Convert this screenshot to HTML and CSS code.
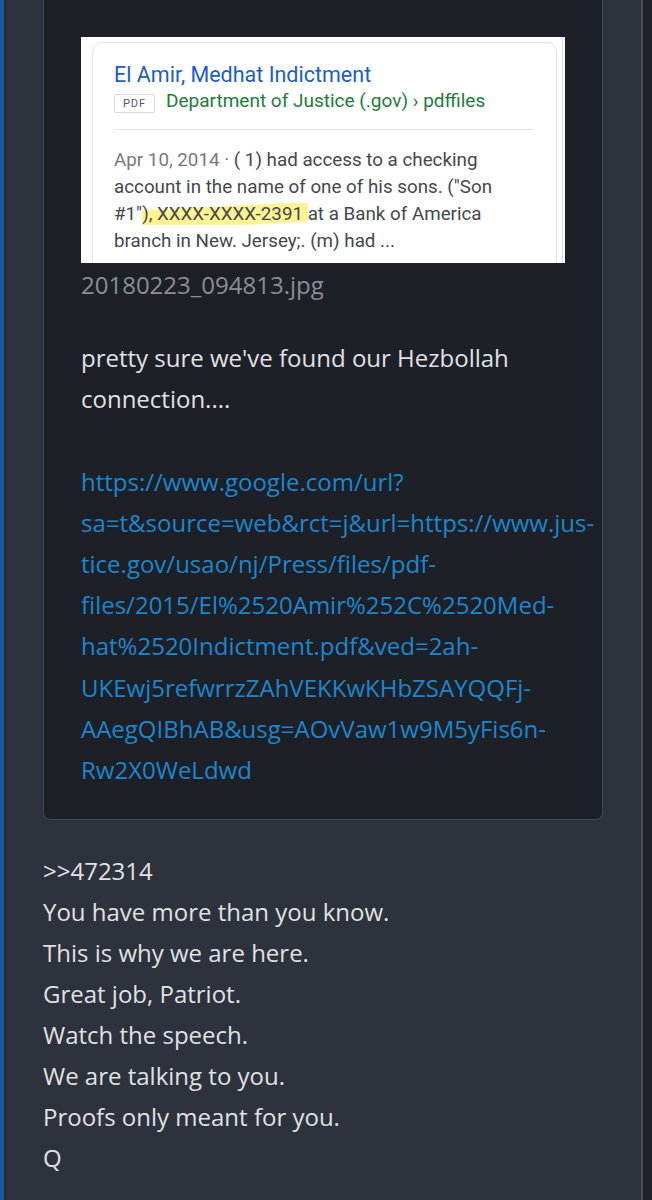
FILE: index.html
```html
<!DOCTYPE html>
<html>
<head>
<meta charset="utf-8">
<link rel="stylesheet" href="styles.css">
</head>
<body>
<div class="page">
  <div class="stripe"></div>
  <div class="post">
    <div class="quote">
      <div class="shot">
        <div class="gcard">
          <div class="gtitle">El Amir, Medhat Indictment</div>
          <div class="gsrc"><span class="pdf">PDF</span><span class="gsite">Department of Justice (.gov) › pdffiles</span></div>
          <div class="gdiv"></div>
          <div class="gsnip"><span class="gdate">Apr 10, 2014 · </span>( 1) had access to a checking<br>account in the name of one of his sons. ("Son<br>#1"<span class="hl">), XXXX-XXXX-2391 </span>at a Bank of America<br>branch in New. Jersey;. (m) had ...</div>
        </div>
        <div class="gedge"></div>
      </div>
      <div class="caption">20180223_094813.jpg</div>
      <p class="qtext">pretty sure we've found our Hezbollah<br>connection....<br><br><a class="link">https://www.google.com/url?<br>sa=t&amp;source=web&amp;rct=j&amp;url=https://www.jus-<br>tice.gov/usao/nj/Press/files/pdf-<br>files/2015/El%2520Amir%252C%2520Med-<br>hat%2520Indictment.pdf&amp;ved=2ah-<br>UKEwj5refwrrzZAhVEKKwKHbZSAYQQFj-<br>AAegQIBhAB&amp;usg=AOvVaw1w9M5yFis6n-<br>Rw2X0WeLdwd</a></p>
    </div>
    <div class="msg">
      <div>&gt;&gt;472314</div>
      <div>You have more than you know.</div>
      <div>This is why we are here.</div>
      <div>Great job, Patriot.</div>
      <div>Watch the speech.</div>
      <div>We are talking to you.</div>
      <div>Proofs only meant for you.</div>
      <div>Q</div>
    </div>
  </div>
  <div class="rail"></div>
</div>
</body>
</html>
```

FILE: styles.css
```css
html, body {
  margin: 0;
  padding: 0;
  background: #1f2229;
  height: 1200px;
  overflow: hidden;
}
.page {
  display: flex;
  height: 1200px;
  font-family: "Open Sans", "DejaVu Sans", sans-serif;
}
.stripe {
  width: 4px;
  flex: none;
  background: #1a57a2;
  border-right: 3px solid #2b2d34;
}
.post {
  width: 636px;
  flex: none;
  background: #2e323c;
  border-right: 2px solid #4a4f58;
  padding-left: 36px;
  box-sizing: border-box;
}
.rail {
  flex: 1;
  background: #1f2229;
}
.quote {
  width: 560px;
  box-sizing: border-box;
  background: #1e2028;
  border: 1px solid #41464f;
  border-top: none;
  border-radius: 0 0 7px 7px;
  padding: 37px 0 29px 37px;
}
.shot {
  width: 484px;
  height: 226px;
  background: #fff;
  position: relative;
  overflow: hidden;
  box-sizing: border-box;
  padding: 5px 0 0 11px;
}
.gedge {
  position: absolute;
  right: 2px;
  top: 0;
  bottom: 0;
  width: 1px;
  background: #e2e2e2;
}
.gcard {
  width: 465px;
  height: 250px;
  box-sizing: border-box;
  border: 1px solid #e4e4e4;
  border-radius: 10px;
  padding: 19px 0 0 21px;
  font-family: Roboto, "Liberation Sans", sans-serif;
  box-shadow: 0 0 2px rgba(0,0,0,0.06);
}
.gtitle {
  font-size: 21.5px;
  line-height: 26px;
  color: #1b5ec7;
}
.gsrc {
  display: flex;
  align-items: flex-end;
  height: 25px;
}
.pdf {
  box-sizing: border-box;
  width: 41px;
  height: 19px;
  text-align: center;
  font-size: 11px;
  line-height: 17px;
  color: #55595e;
  letter-spacing: 1px;
  border: 1px solid #d8dadd;
  border-radius: 2px;
  margin-right: 11px;
}
.gsite {
  font-size: 19px;
  color: #1d7c39;
  margin-bottom: 1px;
}
.gdiv {
  width: 419px;
  height: 1px;
  background: #e3e3e3;
  margin-top: 16px;
}
.gsnip {
  margin-top: 17px;
  font-size: 18.8px;
  line-height: 27px;
  color: #44484d;
}
.gdate {
  color: #75797e;
}
.hl {
  background: linear-gradient(177deg, transparent 22%, rgba(255,238,100,0.7) 27%, rgba(255,238,100,0.7) 86%, transparent 92%);
}
.caption {
  margin-top: 1px;
  font-size: 24px;
  line-height: 41px;
  color: #8b8e94;
}
.qtext {
  margin: 32px 0 0 0;
  font-size: 24px;
  line-height: 41.2px;
  color: #e0e1e3;
}
.link {
  color: #1b87cc;
  text-decoration: none;
}
.msg {
  margin-top: 30px;
  font-size: 24px;
  line-height: 41px;
  color: #e0e1e3;
}
```
